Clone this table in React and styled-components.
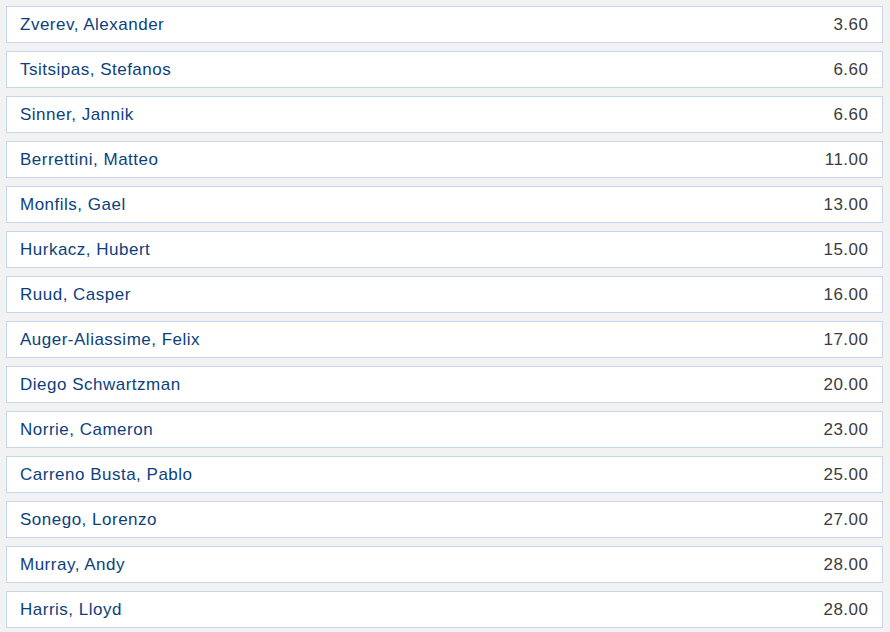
import React from 'react';
import styled, { createGlobalStyle } from 'styled-components';

const GlobalStyle = createGlobalStyle`
	html, body {
		margin: 0;
		padding: 0;
		background: #f2f2f2;
	}
`;

const List = styled.div`
	display: flex;
	flex-direction: column;
	gap: 8px;
	padding: 6px 7px 6px 6px;
	font-family: "Liberation Sans", Arial, sans-serif;
	font-size: 17px;
	letter-spacing: 0.5px;
`;

const Row = styled.div`
	display: flex;
	align-items: center;
	justify-content: space-between;
	height: 35px;
	padding: 0 14px 0 13px;
	background: #fff;
	border: 1px solid #c5d7ec;
`;

const Name = styled.span`
	color: #0d3f7d;
`;

const Odds = styled.span`
	color: #3c3c3c;
	margin-right: -0.5px;
`;

const players = [
	['Zverev, Alexander', '3.60'],
	['Tsitsipas, Stefanos', '6.60'],
	['Sinner, Jannik', '6.60'],
	['Berrettini, Matteo', '11.00'],
	['Monfils, Gael', '13.00'],
	['Hurkacz, Hubert', '15.00'],
	['Ruud, Casper', '16.00'],
	['Auger-Aliassime, Felix', '17.00'],
	['Diego Schwartzman', '20.00'],
	['Norrie, Cameron', '23.00'],
	['Carreno Busta, Pablo', '25.00'],
	['Sonego, Lorenzo', '27.00'],
	['Murray, Andy', '28.00'],
	['Harris, Lloyd', '28.00'],
];

const App = () => (
	<>
		<GlobalStyle />
		<List>
			{players.map(([name, odds]) => (
				<Row key={name}>
					<Name>{name}</Name>
					<Odds>{odds}</Odds>
				</Row>
			))}
		</List>
	</>
);

export default App;
